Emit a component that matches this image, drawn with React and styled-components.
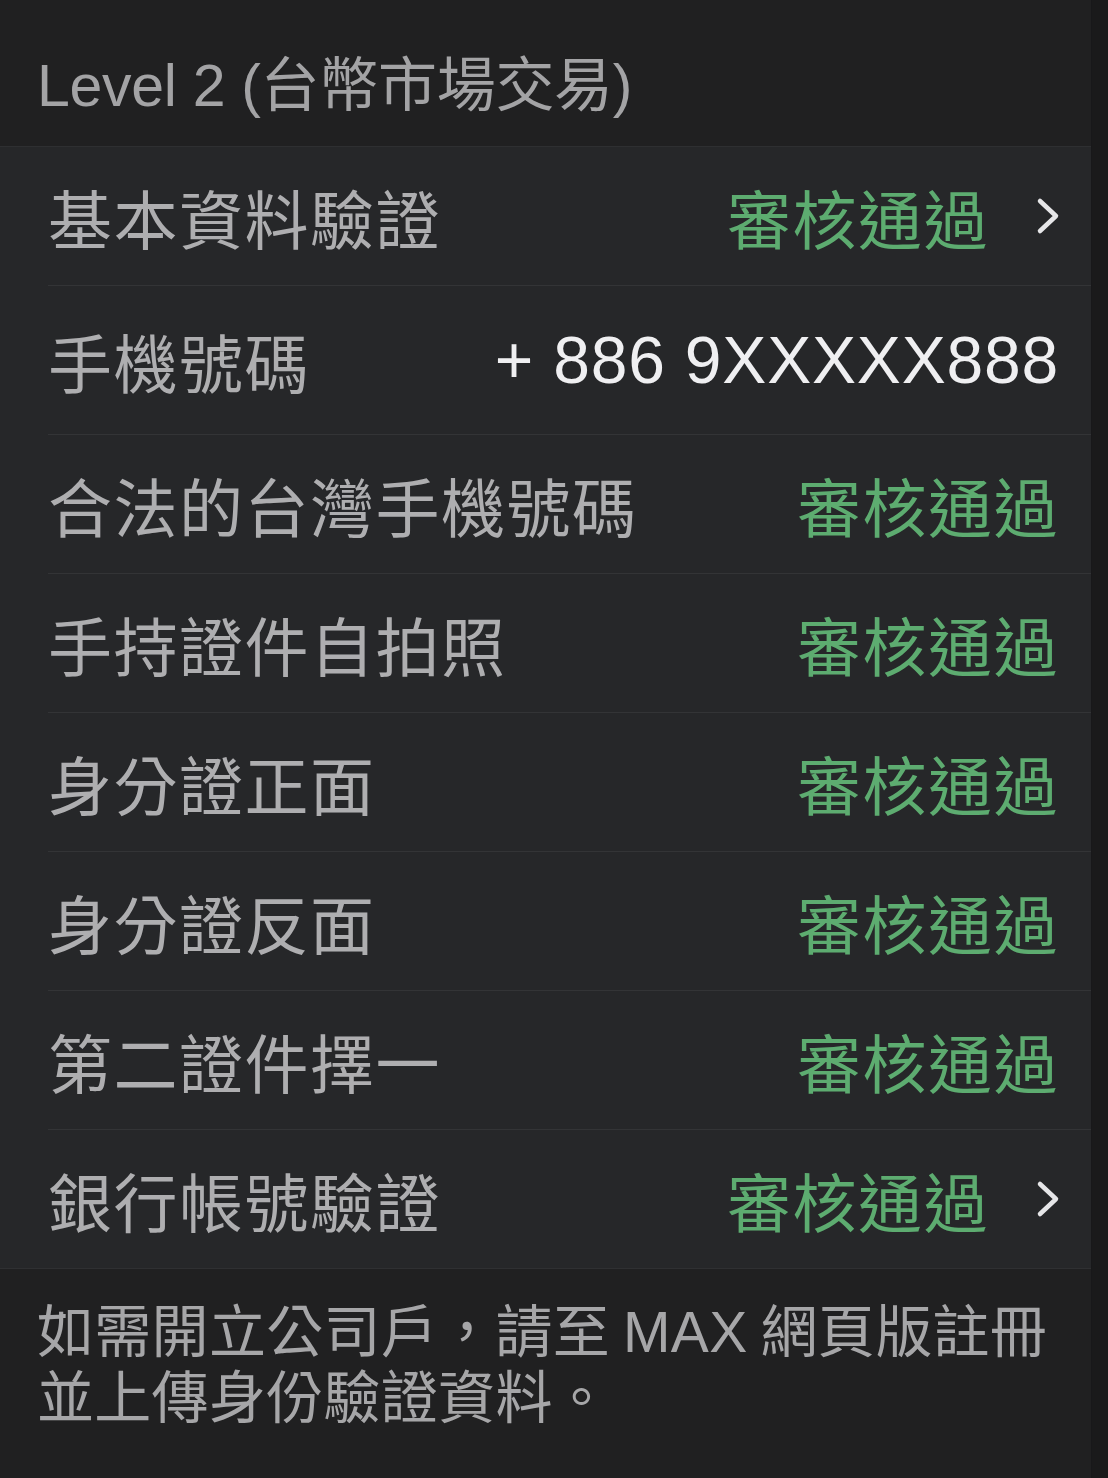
import styled, { createGlobalStyle } from 'styled-components'

const GlobalStyle = createGlobalStyle`
  html, body {
    margin: 0;
    padding: 0;
    background: #202021;
  }
  body {
    font-family: "Liberation Sans", "Noto Sans CJK TC", sans-serif;
  }
`

const Screen = styled.div`
  display: flex;
  width: 1108px;
  min-height: 1478px;
  background: #202021;
`

const Main = styled.div`
  flex: 1;
  display: flex;
  flex-direction: column;
`

const SideStrip = styled.div`
  width: 16px;
  background: #1a1a1b;
  border-left: 1px solid #18181a;
`

const Header = styled.div`
  height: 147px;
  box-sizing: border-box;
  display: flex;
  align-items: center;
  padding: 14px 0 0 37px;
  color: #a3a3a5;
  font-size: 59px;
  letter-spacing: -0.3px;
  border-bottom: 1px solid #2e2f31;
`

const List = styled.div`
  background: #262729;
  border-bottom: 1px solid #2f3032;
`

const Row = styled.div`
  padding-left: 48px;
`

const RowInner = styled.div`
  height: ${({ $tall }) => ($tall ? 148 : 138)}px;
  display: flex;
  align-items: center;
  justify-content: space-between;
  padding-right: ${({ $chevron }) => ($chevron ? 30 : 32)}px;
  border-bottom: ${({ $last }) => ($last ? 'none' : '1px solid #333436')};
`

const Label = styled.span`
  font-family: "Noto Sans CJK TC", sans-serif;
  font-size: 64px;
  color: #aeaeb0;
  font-weight: 400;
  letter-spacing: 1.5px;
`

const Value = styled.span`
  display: flex;
  align-items: center;
  gap: 46px;
`

const Status = styled.span`
  font-family: "Noto Sans CJK TC", sans-serif;
  font-size: 64px;
  color: #5dac70;
  letter-spacing: 1.5px;
`

const Phone = styled.span`
  font-family: "Liberation Sans", sans-serif;
  font-size: 66px;
  color: #efeff1;
  letter-spacing: 0.8px;
`

const Footer = styled.p`
  margin: 0;
  padding: 28px 30px 0 37px;
  font-family: "Noto Sans CJK TC", sans-serif;
  font-size: 57px;
  line-height: 61px;
  letter-spacing: 0.3px;
  color: #a6a6a8;
`

const Latin = styled.span`
  font-family: "Liberation Sans", sans-serif;
`

function Chevron() {
  return (
    <svg width="26" height="38" viewBox="0 0 26 38" fill="none">
      <path d="M5 4 L21 19 L5 34" stroke="#e6e6e8" strokeWidth="4.5" strokeLinecap="round" strokeLinejoin="round" />
    </svg>
  )
}

const rows = [
  { label: '基本資料驗證', status: '審核通過', chevron: true },
  { label: '手機號碼', phone: '+ 886 9XXXXX888' },
  { label: '合法的台灣手機號碼', status: '審核通過' },
  { label: '手持證件自拍照', status: '審核通過' },
  { label: '身分證正面', status: '審核通過' },
  { label: '身分證反面', status: '審核通過' },
  { label: '第二證件擇一', status: '審核通過' },
  { label: '銀行帳號驗證', status: '審核通過', chevron: true },
]

export default function App() {
  return (
    <Screen>
      <GlobalStyle />
      <Main>
        <Header>Level 2 (台幣市場交易)</Header>
        <List>
          {rows.map((r, i) => (
            <Row key={r.label}>
              <RowInner $tall={!!r.phone} $chevron={r.chevron} $last={i === rows.length - 1}>
                <Label>{r.label}</Label>
                {r.phone ? (
                  <Phone>{r.phone}</Phone>
                ) : (
                  <Value>
                    <Status>{r.status}</Status>
                    {r.chevron && <Chevron />}
                  </Value>
                )}
              </RowInner>
            </Row>
          ))}
        </List>
        <Footer>
          如需開立公司戶，請至 <Latin>MAX</Latin> 網頁版註冊
          <br />
          並上傳身份驗證資料。
        </Footer>
      </Main>
      <SideStrip />
    </Screen>
  )
}
